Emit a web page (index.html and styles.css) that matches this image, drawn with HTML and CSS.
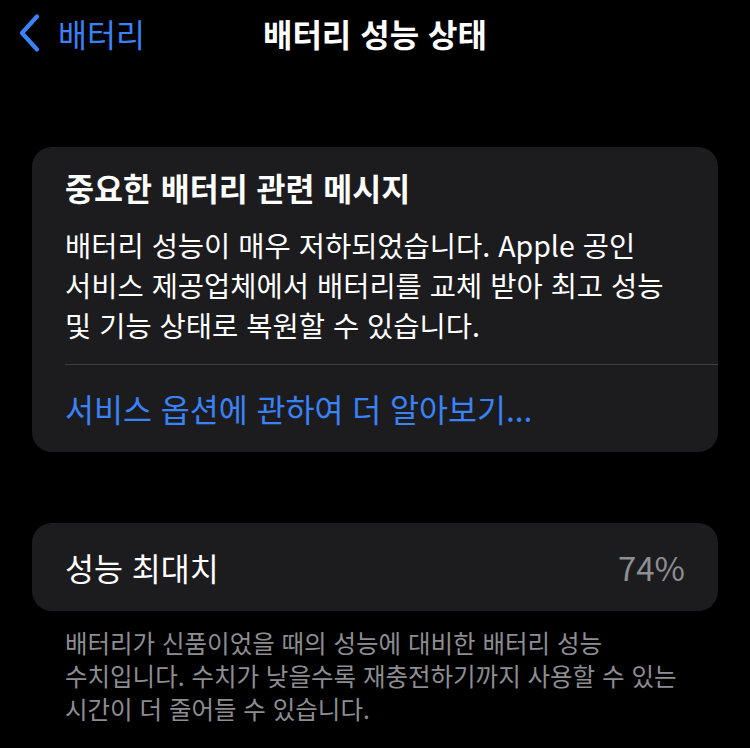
FILE: index.html
```html
<!DOCTYPE html>
<html lang="ko">
<head>
<meta charset="utf-8">
<link rel="stylesheet" href="styles.css">
</head>
<body>
<div class="screen">
  <header class="nav">
    <a class="back">
      <svg class="chev" width="26" height="40" viewBox="0 0 26 40"><path d="M21 3.5 L6 20 L21 36.5" fill="none" stroke="#3a82f7" stroke-width="4.2" stroke-linecap="round" stroke-linejoin="round"/></svg>
      <span class="back-label">배터리</span>
    </a>
    <h1 class="nav-title">배터리 성능 상태</h1>
    <span class="nav-spacer"></span>
  </header>

  <section class="card notice">
    <h2 class="notice-title">중요한 배터리 관련 메시지</h2>
    <p class="notice-body">배터리 성능이 매우 저하되었습니다. Apple 공인<br>서비스 제공업체에서 배터리를 교체 받아 최고 성능<br>및 기능 상태로 복원할 수 있습니다.</p>
    <div class="divider"></div>
    <a class="notice-link">서비스 옵션에 관하여 더 알아보기...</a>
  </section>

  <section class="card row">
    <span class="row-label">성능 최대치</span>
    <span class="row-value">74%</span>
  </section>
  <p class="footnote">배터리가 신품이었을 때의 성능에 대비한 배터리 성능<br>수치입니다. 수치가 낮을수록 재충전하기까지 사용할 수 있는<br>시간이 더 줄어들 수 있습니다.</p>
</div>
</body>
</html>
```

FILE: styles.css
```css
html, body {
  margin: 0;
  padding: 0;
  background: #000;
}
body {
  font-family: "Noto Sans CJK KR", "Noto Sans", sans-serif;
  color: #fff;
  width: 750px;
  height: 748px;
  overflow: hidden;
}
.screen {
  display: flex;
  flex-direction: column;
}
.nav {
  height: 66px;
  display: grid;
  grid-template-columns: 1fr auto 1fr;
  align-items: center;
}
.back {
  display: flex;
  align-items: center;
  gap: 16px;
  padding-left: 16px;
  color: #3a82f7;
}
.chev { display: block; }
.back-label {
  font-size: 31.5px;
  line-height: 40px;
}
.nav-title {
  margin: 0;
  font-size: 32px;
  font-weight: 600;
  line-height: 40px;
}
.card {
  background: #1c1c1e;
  border-radius: 20px;
  margin: 0 32px;
}
.notice {
  margin-top: 81px;
  padding: 20px 0 24px 33px;
  display: flex;
  flex-direction: column;
}
.notice-title {
  margin: 0;
  font-size: 31.5px;
  font-weight: 600;
  line-height: 40px;
  white-space: nowrap;
}
.notice-body {
  margin: 18px 0 0;
  font-size: 28.5px;
  line-height: 40px;
  white-space: nowrap;
}
.divider {
  height: 1px;
  background: #3d3d40;
  margin-top: 19px;
}
.notice-link {
  margin-top: 23px;
  color: #3a82f7;
  font-size: 31.5px;
  line-height: 40px;
}
.row {
  margin-top: 71px;
  height: 88px;
  display: flex;
  align-items: center;
  justify-content: space-between;
  padding: 0 33px;
}
.row-label {
  font-size: 31.5px;
}
.row-value {
  font-size: 33px;
  color: #8e8e93;
}
.footnote {
  margin: 15px 0 0 65px;
  font-size: 24.5px;
  line-height: 33px;
  color: #8d8d92;
  white-space: nowrap;
}
```
